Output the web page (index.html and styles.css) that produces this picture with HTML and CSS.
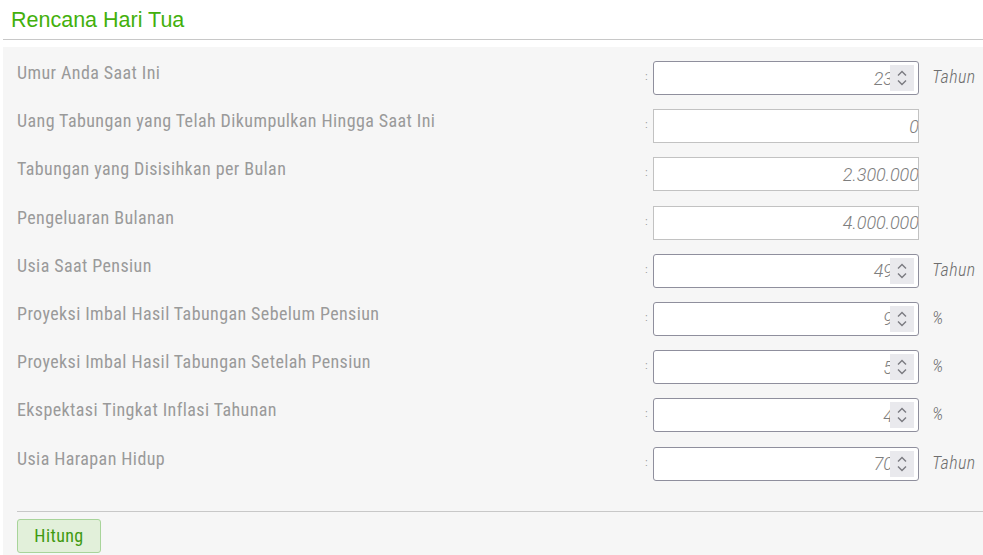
FILE: index.html
```html
<!DOCTYPE html>
<html lang="id">
<head>
<meta charset="utf-8">
<title>Rencana Hari Tua</title>
<link rel="stylesheet" href="styles.css">
</head>
<body>
<div class="page">
  <h1 class="title">Rencana Hari Tua</h1>
  <div class="panel">
    <div class="rows">
      <div class="row">
        <div class="label">Umur Anda Saat Ini</div>
        <span class="colon">:</span>
        <div class="field spin"><span class="val">23</span><span class="spinner"><svg width="24" height="26" viewBox="0 0 24 26"><path d="M8 10.5 L12 6.5 L16 10.5" /><path d="M8 15.5 L12 19.5 L16 15.5" /></svg></span></div>
        <span class="unit">Tahun</span>
      </div>
      <div class="row">
        <div class="label">Uang Tabungan yang Telah Dikumpulkan Hingga Saat Ini</div>
        <span class="colon">:</span>
        <div class="field text"><span class="val">0</span></div>
      </div>
      <div class="row">
        <div class="label">Tabungan yang Disisihkan per Bulan</div>
        <span class="colon">:</span>
        <div class="field text"><span class="val">2.300.000</span></div>
      </div>
      <div class="row">
        <div class="label">Pengeluaran Bulanan</div>
        <span class="colon">:</span>
        <div class="field text"><span class="val">4.000.000</span></div>
      </div>
      <div class="row">
        <div class="label">Usia Saat Pensiun</div>
        <span class="colon">:</span>
        <div class="field spin"><span class="val">49</span><span class="spinner"><svg width="24" height="26" viewBox="0 0 24 26"><path d="M8 10.5 L12 6.5 L16 10.5" /><path d="M8 15.5 L12 19.5 L16 15.5" /></svg></span></div>
        <span class="unit">Tahun</span>
      </div>
      <div class="row">
        <div class="label">Proyeksi Imbal Hasil Tabungan Sebelum Pensiun</div>
        <span class="colon">:</span>
        <div class="field spin"><span class="val">9</span><span class="spinner"><svg width="24" height="26" viewBox="0 0 24 26"><path d="M8 10.5 L12 6.5 L16 10.5" /><path d="M8 15.5 L12 19.5 L16 15.5" /></svg></span></div>
        <span class="unit">%</span>
      </div>
      <div class="row">
        <div class="label">Proyeksi Imbal Hasil Tabungan Setelah Pensiun</div>
        <span class="colon">:</span>
        <div class="field spin"><span class="val">5</span><span class="spinner"><svg width="24" height="26" viewBox="0 0 24 26"><path d="M8 10.5 L12 6.5 L16 10.5" /><path d="M8 15.5 L12 19.5 L16 15.5" /></svg></span></div>
        <span class="unit">%</span>
      </div>
      <div class="row">
        <div class="label">Ekspektasi Tingkat Inflasi Tahunan</div>
        <span class="colon">:</span>
        <div class="field spin"><span class="val">4</span><span class="spinner"><svg width="24" height="26" viewBox="0 0 24 26"><path d="M8 10.5 L12 6.5 L16 10.5" /><path d="M8 15.5 L12 19.5 L16 15.5" /></svg></span></div>
        <span class="unit">%</span>
      </div>
      <div class="row">
        <div class="label">Usia Harapan Hidup</div>
        <span class="colon">:</span>
        <div class="field spin"><span class="val">70</span><span class="spinner"><svg width="24" height="26" viewBox="0 0 24 26"><path d="M8 10.5 L12 6.5 L16 10.5" /><path d="M8 15.5 L12 19.5 L16 15.5" /></svg></span></div>
        <span class="unit">Tahun</span>
      </div>
    </div>
    <div class="footer">
      <button class="btn" type="button">Hitung</button>
    </div>
  </div>
</div>
</body>
</html>
```

FILE: styles.css
```css
html, body {
  margin: 0;
  padding: 0;
  background: #ffffff;
  overflow: hidden;
}
.page {
  padding-left: 3px;
  height: 555px;
  display: flex;
  flex-direction: column;
}
.title {
  margin: 0;
  padding: 8px 0 7px 8px;
  font-family: "Liberation Sans", Arial, sans-serif;
  font-weight: normal;
  font-size: 21.5px;
  line-height: 24px;
  color: #43b00c;
  border-bottom: 1px solid #c8c8c8;
}
.panel {
  margin-top: 7px;
  flex: 1;
  background: #f6f6f6;
  padding: 14px 0 0 14px;
}
.rows {
  display: flex;
  flex-direction: column;
  gap: 14.2px;
}
.row {
  display: flex;
  align-items: flex-start;
  height: 34px;
}
.label {
  width: 628px;
  margin-top: 1px;
  font-family: Roboto, "Noto Sans", sans-serif;
  font-stretch: 87.5%;
  font-size: 18px;
  letter-spacing: 0.4px;
  line-height: 21px;
  color: #9a9a9a;
  white-space: nowrap;
}
.colon {
  width: 8px;
  margin-top: 9px;
  font-family: "Liberation Sans", Arial, sans-serif;
  font-size: 10px;
  line-height: 14px;
  color: #999;
}
.field {
  width: 266px;
  height: 34px;
  box-sizing: border-box;
  background: #ffffff;
  display: flex;
  align-items: center;
  justify-content: flex-end;
  overflow: hidden;
}
.field.spin {
  border: 1px solid #8f8f9d;
  border-radius: 3px;
  padding-right: 4px;
}
.field.text {
  border: 1px solid #c2c2c2;
}
.val {
  font-family: Roboto, "Noto Sans", sans-serif;
  font-style: italic;
  font-weight: 300;
  font-size: 18px;
  color: #7e7e7e;
  white-space: nowrap;
}
.field.text .val {
  margin-right: -1px;
}
.field.spin .val {
  margin-right: -3px;
}
.spinner {
  position: relative;
  width: 24px;
  height: 26px;
  background: #e9e9ed;
  display: flex;
}
.spinner path {
  fill: none;
  stroke: #7a7a80;
  stroke-width: 1.4;
}
.unit {
  margin-left: 13px;
  margin-top: 5px;
  font-family: Roboto, "Noto Sans", sans-serif;
  font-stretch: 87.5%;
  font-style: italic;
  font-weight: 300;
  font-size: 18px;
  letter-spacing: 0.4px;
  line-height: 21px;
  color: #6e6e6e;
}
.footer {
  margin-top: 30px;
  border-top: 1px solid #c8c8c8;
  padding-top: 7px;
}
.btn {
  display: block;
  margin: 0;
  width: 84px;
  height: 34px;
  background: #e2f0da;
  border: 1px solid #a8d49a;
  border-radius: 3px;
  font-family: Roboto, "Noto Sans", sans-serif;
  font-stretch: 87.5%;
  font-size: 18px;
  letter-spacing: 0.4px;
  color: #3f9a10;
  padding: 0;
}
```
